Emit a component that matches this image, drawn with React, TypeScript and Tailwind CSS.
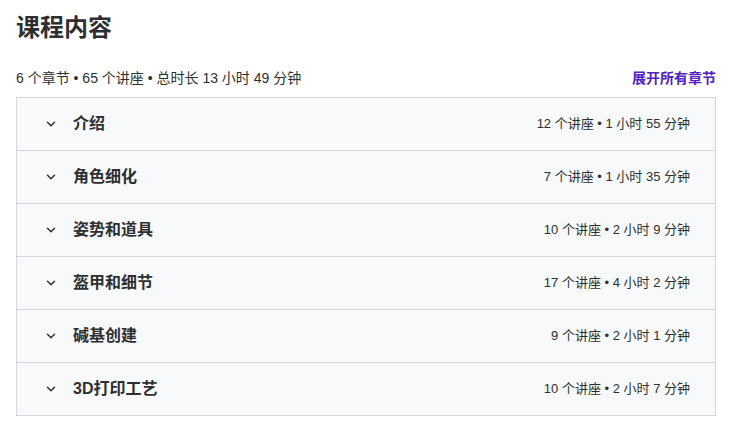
import { ChevronDown } from "lucide-react";

const sections = [
  { title: "介绍", meta: "12 个讲座 • 1 小时 55 分钟" },
  { title: "角色细化", meta: "7 个讲座 • 1 小时 35 分钟" },
  { title: "姿势和道具", meta: "10 个讲座 • 2 小时 9 分钟" },
  { title: "盔甲和细节", meta: "17 个讲座 • 4 小时 2 分钟" },
  { title: "碱基创建", meta: "9 个讲座 • 2 小时 1 分钟" },
  { title: "3D打印工艺", meta: "10 个讲座 • 2 小时 7 分钟" },
];

const App = () => {
  return (
    <div className="w-[734px] h-[441px] bg-white px-4 pt-[12px] text-[#2d2f31] font-['Liberation_Sans','Noto_Sans_CJK_SC',sans-serif]">
      <h2 className="text-[24px] font-bold leading-[32px]">课程内容</h2>
      <div className="mt-[24px] flex items-center justify-between leading-[20px] w-[700px]">
        <span className="text-[14px]">6 个章节 • 65 个讲座 • 总时长 13 小时 49 分钟</span>
        <button className="text-[14px] font-bold text-[#5022c3]">展开所有章节</button>
      </div>
      <div className="mt-[9px] w-[700px] border-x border-t border-[#d1d7dc] bg-[#f7f9fa]">
        {sections.map((s) => (
          <div
            key={s.title}
            className="flex h-[53px] items-center justify-between border-b border-[#d1d7dc] pl-[27px] pr-[25px]"
          >
            <div className="flex items-center gap-[15px]">
              <ChevronDown className="h-[14px] w-[14px] text-[#2d2f31]" strokeWidth={2.5} />
              <span className="text-[16px] font-bold">{s.title}</span>
            </div>
            <span className="text-[13px]">{s.meta}</span>
          </div>
        ))}
      </div>
    </div>
  );
};

export default App;
